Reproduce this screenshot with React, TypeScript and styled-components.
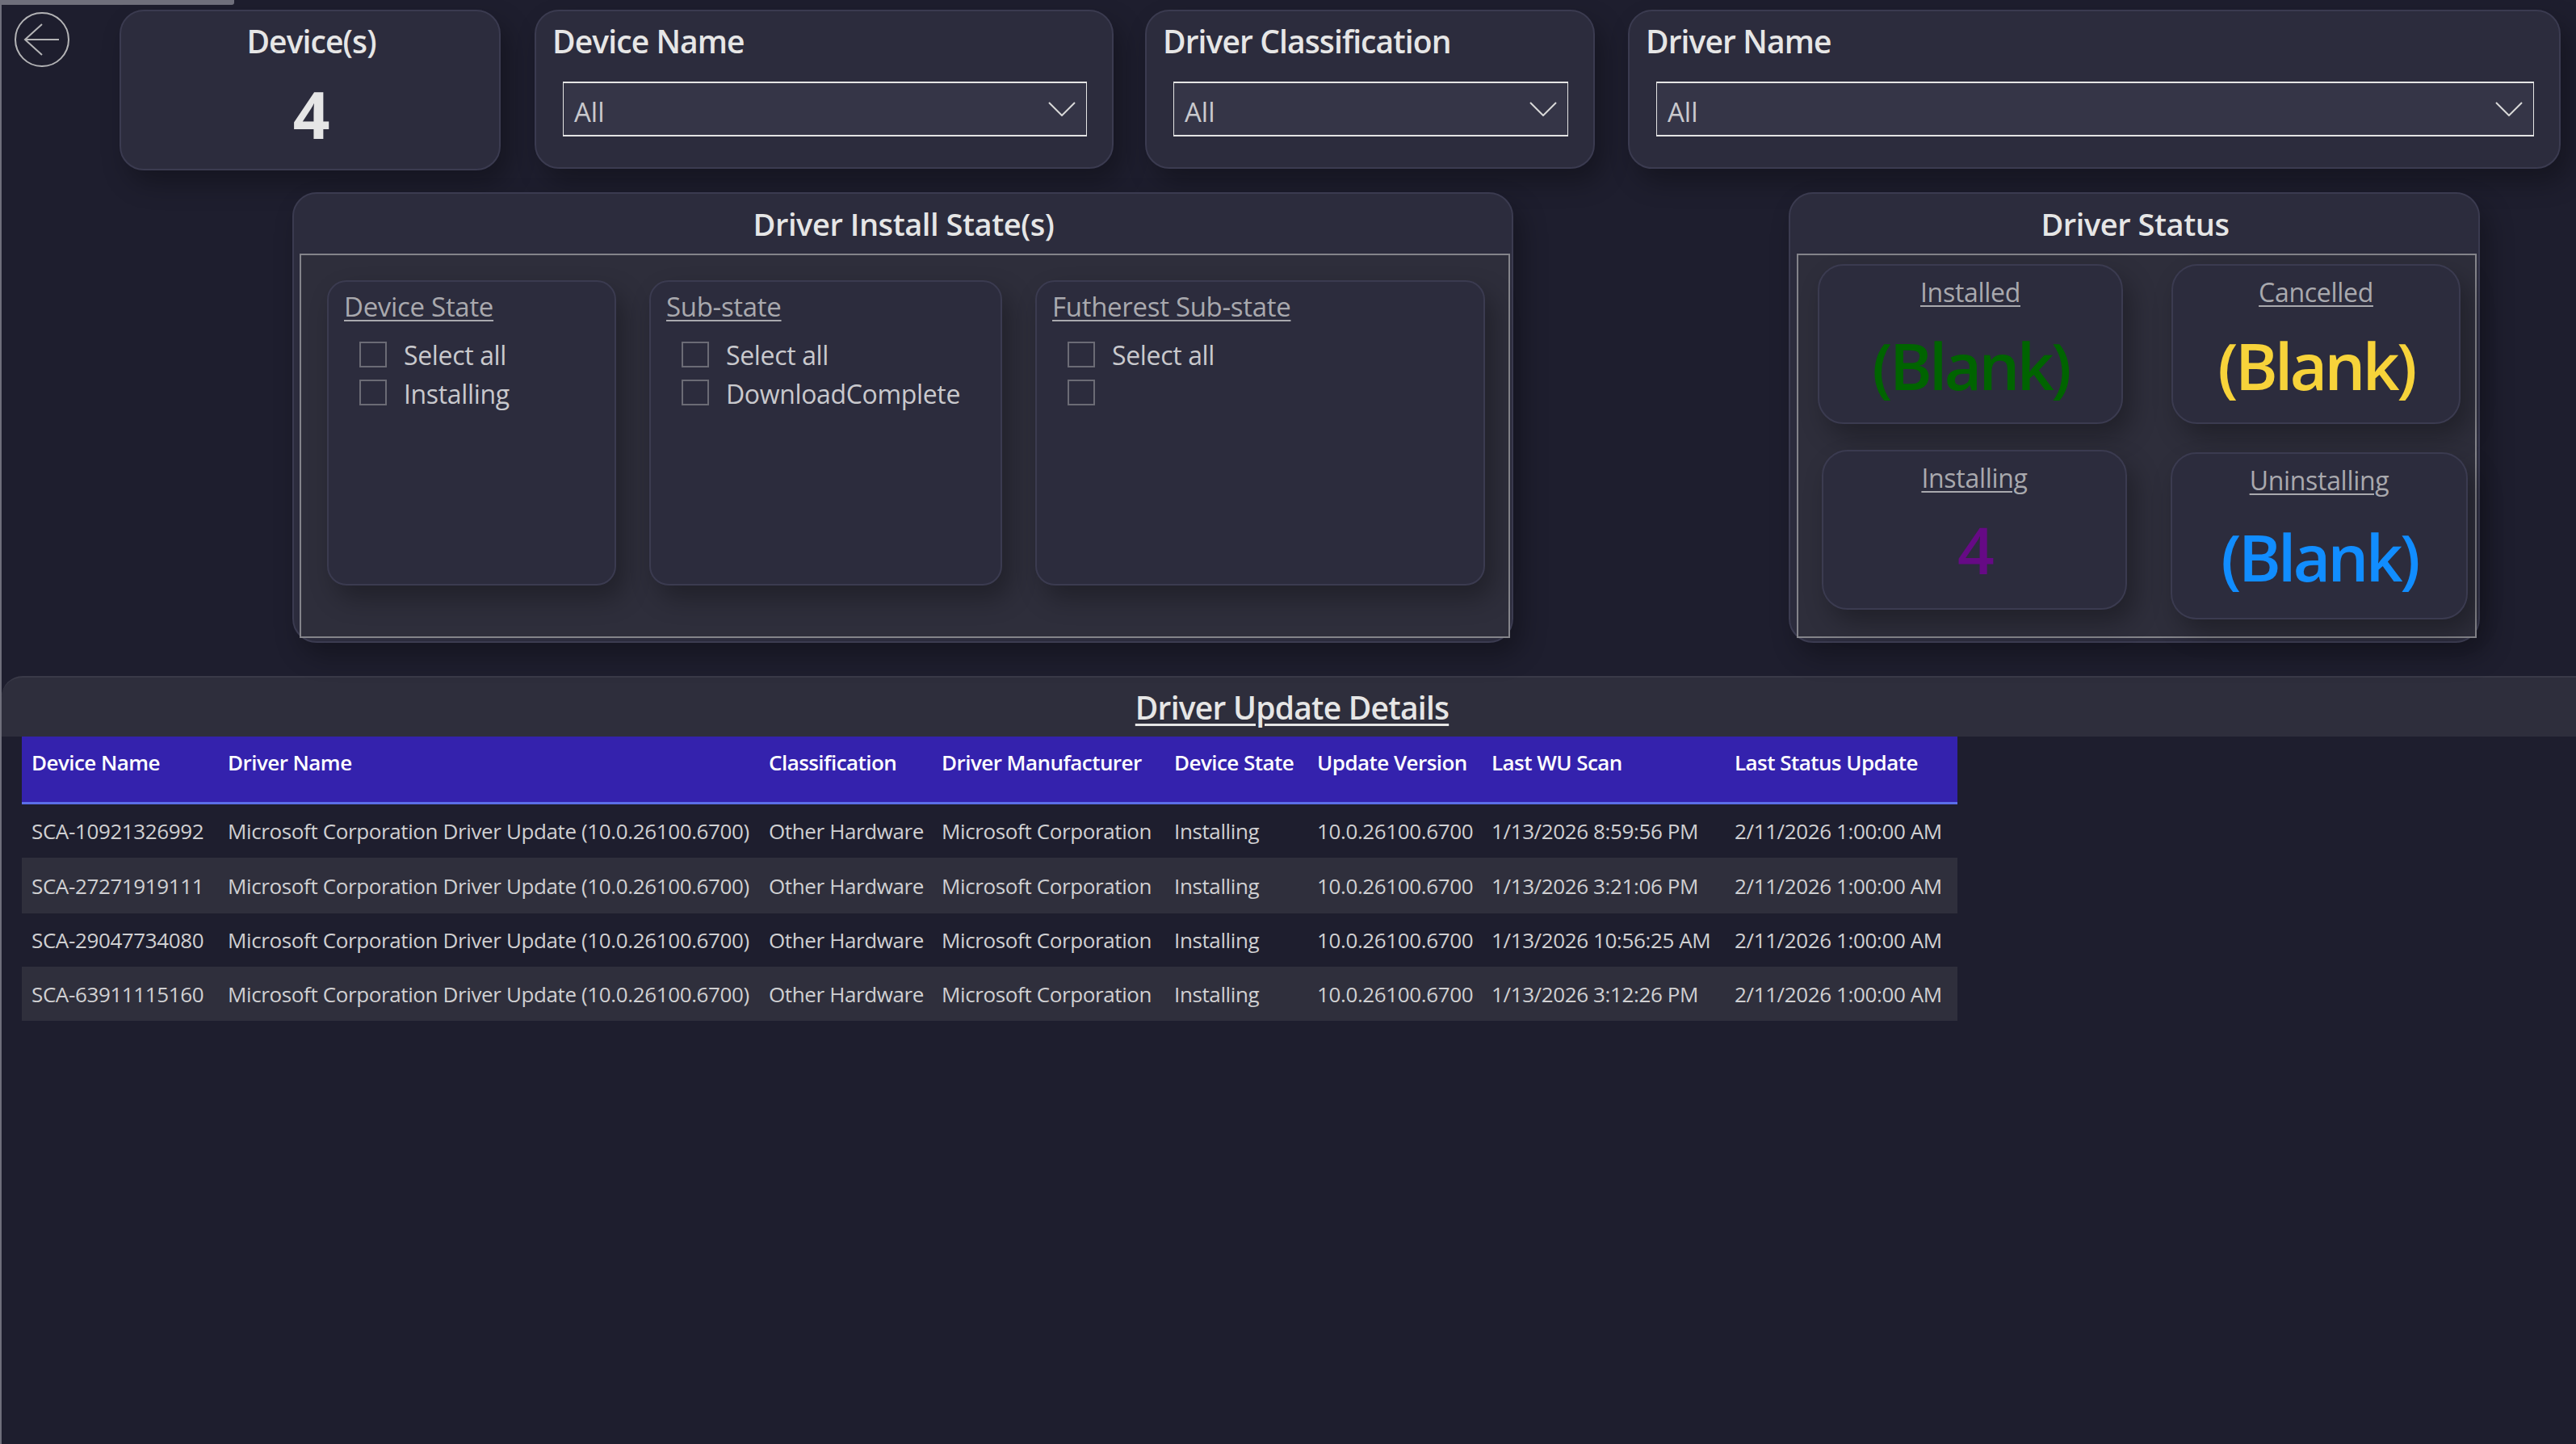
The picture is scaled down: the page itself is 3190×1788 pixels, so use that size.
import * as React from "react";
import styled, { createGlobalStyle } from "styled-components";

const font = `"Open Sans", "Noto Sans", "Liberation Sans", sans-serif`;

const colors = {
  page: "#1e1e2e",
  card: "#2c2c3d",
  cardEdge: "#3b3b50",
  box: "#2e2e3b",
  boxEdge: "#84848a",
  title: "#e6e6e6",
  muted: "#a9a9ae",
  item: "#c9c9cd",
  headBg: "#3422ad",
  headLine: "#5b6ee8",
  rowAlt: "#2f2f3c",
  rowText: "#d0d0d2",
};

const GlobalStyle = createGlobalStyle`
  html, body {
    margin: 0;
    background: ${colors.page};
    overflow: hidden;
  }
`;

type Column = { key: string; label: string; width: number };

const columns: Column[] = [
  { key: "device", label: "Device Name", width: 243 },
  { key: "driver", label: "Driver Name", width: 670 },
  { key: "cls", label: "Classification", width: 214 },
  { key: "maker", label: "Driver Manufacturer", width: 288 },
  { key: "state", label: "Device State", width: 177 },
  { key: "version", label: "Update Version", width: 216 },
  { key: "scan", label: "Last WU Scan", width: 301 },
  { key: "status", label: "Last Status Update", width: 288 },
];

const scans = [
  ["SCA-10921326992", "1/13/2026 8:59:56 PM"],
  ["SCA-27271919111", "1/13/2026 3:21:06 PM"],
  ["SCA-29047734080", "1/13/2026 10:56:25 AM"],
  ["SCA-63911115160", "1/13/2026 3:12:26 PM"],
];

const rows = scans.map(([device, scan]) => [
  device,
  "Microsoft Corporation Driver Update (10.0.26100.6700)",
  "Other Hardware",
  "Microsoft Corporation",
  "Installing",
  "10.0.26100.6700",
  scan,
  "2/11/2026 1:00:00 AM",
]);

const BackIcon: React.FC = () => (
  <svg width="70" height="70" viewBox="0 0 70 70" fill="none" stroke="#b4b4b6" strokeWidth="2">
    <circle cx="35" cy="35" r="33" />
    <path d="M56 35H14M35 16L14 35L35 54" />
  </svg>
);

const Chevron: React.FC = () => (
  <svg width="34" height="18" viewBox="0 0 34 18" fill="none" stroke="#d8d8d8" strokeWidth="2">
    <path d="M1 1L17 17L33 1" />
  </svg>
);

const Dropdown: React.FC = () => (
  <Select>
    <span>All</span>
    <Chevron />
  </Select>
);

const Slicer: React.FC<{ title: string; items: string[]; width: number }> = ({ title, items, width }) => (
  <SlicerCard $width={width}>
    <SlicerTitle>{title}</SlicerTitle>
    {items.map((item, i) => (
      <SlicerItem key={i}>
        <CheckBox />
        <span>{item}</span>
      </SlicerItem>
    ))}
  </SlicerCard>
);

const App: React.FC = () => {
  return (
    <Page>
      <GlobalStyle />
      <LoadBar />
      <TopRow>
        <BackButton>
          <BackIcon />
        </BackButton>
        <CountCard>
          <CardHeading $center>Device(s)</CardHeading>
          <BigCount>4</BigCount>
        </CountCard>
        <FilterCard $width={717} $gap={42}>
          <CardHeading>Device Name</CardHeading>
          <Dropdown />
        </FilterCard>
        <FilterCard $width={557} $gap={39}>
          <CardHeading>Driver Classification</CardHeading>
          <Dropdown />
        </FilterCard>
        <FilterCard $width={1155} $gap={41}>
          <CardHeading>Driver Name</CardHeading>
          <Dropdown />
        </FilterCard>
      </TopRow>

      <MiddleRow>
        <Panel $width={1512} $gap={360}>
          <PanelHeading>Driver Install State(s)</PanelHeading>
          <PanelBox $left={9}>
            <SlicerRow>
              <Slicer title="Device State" items={["Select all", "Installing"]} width={358} />
              <Slicer title="Sub-state" items={["Select all", "DownloadComplete"]} width={437} />
              <Slicer title="Futherest Sub-state" items={["Select all", ""]} width={557} />
            </SlicerRow>
          </PanelBox>
        </Panel>
        <Panel $width={856} $gap={341}>
          <PanelHeading>Driver Status</PanelHeading>
          <PanelBox $left={10}>
            <StatusGrid>
              <StatusCard $width={378} $height={198}>
                <StatusLabel>Installed</StatusLabel>
                <StatusValue $color="#006400" $gap={14}>(Blank)</StatusValue>
              </StatusCard>
              <StatusCard $width={358} $height={198} $left={1}>
                <StatusLabel>Cancelled</StatusLabel>
                <StatusValue $color="#f7d33a" $gap={14}>(Blank)</StatusValue>
              </StatusCard>
              <StatusCard $width={378} $height={198} $left={5}>
                <StatusLabel>Installing</StatusLabel>
                <StatusValue $color="#660a85" $gap={12}>4</StatusValue>
              </StatusCard>
              <StatusCard $width={368} $height={207} $top={3}>
                <StatusLabel>Uninstalling</StatusLabel>
                <StatusValue $color="#118dff" $gap={18}>(Blank)</StatusValue>
              </StatusCard>
            </StatusGrid>
          </PanelBox>
        </Panel>
      </MiddleRow>

      <DetailsSection>
        <DetailsHeading>
          <span>Driver Update Details</span>
        </DetailsHeading>
        <DetailsTable>
          <colgroup>
            {columns.map((c) => (
              <col key={c.key} style={{ width: c.width }} />
            ))}
          </colgroup>
          <thead>
            <tr>
              {columns.map((c) => (
                <HeadCell key={c.key}>{c.label}</HeadCell>
              ))}
            </tr>
          </thead>
          <tbody>
            {rows.map((row) => (
              <BodyRow key={row[0]}>
                {row.map((value, i) => (
                  <BodyCell key={i}>{value}</BodyCell>
                ))}
              </BodyRow>
            ))}
          </tbody>
        </DetailsTable>
      </DetailsSection>
    </Page>
  );
};

const Page = styled.div`
  background: ${colors.page};
  border-left: 2px solid #6f6f7b;
  box-sizing: border-box;
  color: ${colors.title};
  font-family: ${font};
  font-stretch: 88%;
  height: 100vh;
  overflow: hidden;
  padding-top: 12px;
  position: relative;
  width: 100vw;
`;

const LoadBar = styled.div`
  background: #6f6f7b;
  border-bottom-right-radius: 3px;
  height: 6px;
  left: -2px;
  position: absolute;
  top: 0;
  width: 290px;
`;

const TopRow = styled.div`
  align-items: flex-start;
  display: flex;
  padding-left: 15px;
`;

const BackButton = styled.div`
  height: 70px;
  margin-right: 61px;
  margin-top: 2px;
  width: 70px;
`;

const cardSurface = `
  background: ${colors.card};
  border: 2px solid ${colors.cardEdge};
  box-shadow: 10px 16px 32px rgba(0, 0, 0, 0.3);
  box-sizing: border-box;
`;

const CountCard = styled.div`
  ${cardSurface}
  border-radius: 30px;
  height: 199px;
  padding-left: 3px;
  padding-top: 14px;
  text-align: center;
  width: 472px;
`;

const FilterCard = styled.div<{ $width: number; $gap: number }>`
  ${cardSurface}
  border-radius: 30px;
  height: 197px;
  margin-left: ${(p) => p.$gap}px;
  padding-top: 14px;
  width: ${(p) => p.$width}px;
`;

const CardHeading = styled.div<{ $center?: boolean }>`
  color: ${colors.title};
  font-size: 39px;
  font-weight: 600;
  letter-spacing: -0.9px;
  line-height: 46px;
  padding-left: ${(p) => (p.$center ? 0 : 20)}px;
`;

const BigCount = styled.div`
  color: ${colors.title};
  font-size: 80px;
  font-weight: 700;
  line-height: 100px;
  margin-top: 17px;
`;

const Select = styled.div`
  align-items: center;
  background: #353547;
  border: 1px solid #e4e4e4;
  border-bottom-width: 2px;
  border-top-width: 2px;
  box-sizing: border-box;
  color: ${colors.item};
  display: flex;
  font-size: 33px;
  height: 68px;
  justify-content: space-between;
  margin: 27px 31px 0 33px;
  padding: 0 13px;

  span {
    position: relative;
    top: 3px;
  }
`;

const MiddleRow = styled.div`
  align-items: flex-start;
  display: flex;
  margin-top: 27px;
`;

const Panel = styled.div<{ $width: number; $gap: number }>`
  ${cardSurface}
  border-radius: 30px;
  height: 558px;
  margin-left: ${(p) => p.$gap}px;
  width: ${(p) => p.$width}px;
`;

const PanelHeading = styled.div`
  color: ${colors.title};
  font-size: 38px;
  font-weight: 600;
  height: 74px;
  letter-spacing: -0.45px;
  line-height: 74px;
  padding-left: 2px;
  text-align: center;
`;

const PanelBox = styled.div<{ $left: number }>`
  background: ${colors.box};
  border: 2px solid ${colors.boxEdge};
  box-sizing: border-box;
  height: 476px;
  margin-left: ${(p) => p.$left - 2}px;
  margin-right: 2px;
`;

const SlicerRow = styled.div`
  display: flex;
  gap: 41px;
  padding: 31px 0 0 32px;
`;

const SlicerCard = styled.div<{ $width: number }>`
  ${cardSurface}
  border-radius: 24px;
  height: 378px;
  padding: 0 0 0 19px;
  width: ${(p) => p.$width}px;
`;

const SlicerTitle = styled.div`
  color: ${colors.muted};
  font-size: 33px;
  letter-spacing: -0.3px;
  line-height: 42px;
  margin-bottom: 14px;
  margin-top: 10px;
  text-decoration: underline;
  text-decoration-thickness: 2px;
  text-underline-offset: 4px;
`;

const SlicerItem = styled.div`
  align-items: center;
  color: ${colors.item};
  display: flex;
  font-size: 32px;
  gap: 21px;
  height: 47.5px;
  letter-spacing: -0.35px;
  padding-left: 19px;

  span {
    padding-top: 2px;
  }
`;

const CheckBox = styled.div`
  border: 2px solid #6b6b75;
  box-sizing: border-box;
  flex: none;
  height: 32px;
  width: 34px;
`;

const StatusGrid = styled.div`
  display: grid;
  grid-template-columns: 437px 1fr;
  padding: 11px 0 0 24px;
  row-gap: 32px;
`;

const StatusCard = styled.div<{ $width: number; $height: number; $left?: number; $top?: number }>`
  ${cardSurface}
  border-radius: 32px;
  height: ${(p) => p.$height}px;
  margin-left: ${(p) => p.$left ?? 0}px;
  margin-top: ${(p) => p.$top ?? 0}px;
  padding-top: 11px;
  text-align: center;
  width: ${(p) => p.$width}px;
`;

const StatusLabel = styled.div`
  color: ${colors.muted};
  font-size: 32px;
  letter-spacing: -0.3px;
  line-height: 44px;
  text-decoration: underline;
  text-decoration-thickness: 2px;
  text-underline-offset: 4px;
`;

const StatusValue = styled.div<{ $color: string; $gap: number }>`
  color: ${(p) => p.$color};
  font-size: 80px;
  font-weight: 600;
  letter-spacing: -3.6px;
  line-height: 110px;
  margin-top: ${(p) => p.$gap - 1}px;
`;

const DetailsSection = styled.section`
  margin-top: 41px;
`;

const DetailsHeading = styled.div`
  background: #2e2e3c;
  border-top: 2px solid #3a3a48;
  border-top-left-radius: 26px;
  box-sizing: border-box;
  color: ${colors.title};
  font-size: 39px;
  font-weight: 600;
  height: 75px;
  letter-spacing: -0.77px;
  line-height: 74px;
  padding-left: 8px;
  text-align: center;
  text-decoration: underline;
  text-decoration-thickness: 3px;
  text-underline-offset: 5px;
`;

const DetailsTable = styled.table`
  border-collapse: separate;
  border-spacing: 0;
  margin-left: 25px;
  table-layout: fixed;
  width: 2397px;
`;

const HeadCell = styled.th`
  background: ${colors.headBg};
  border-bottom: 3px solid ${colors.headLine};
  box-sizing: border-box;
  color: #ffffff;
  font-size: 26px;
  font-weight: 600;
  height: 84px;
  letter-spacing: -0.55px;
  padding: 0 0 18px 12px;
  text-align: left;
  white-space: nowrap;
`;

const BodyRow = styled.tr`
  td {
    height: 66px;
  }

  &:nth-child(2) td {
    height: 69px;
  }

  &:nth-child(4) td {
    height: 67px;
  }

  &:nth-child(even) td {
    background: ${colors.rowAlt};
  }
`;

const BodyCell = styled.td`
  color: ${colors.rowText};
  font-size: 26px;
  letter-spacing: -0.38px;
  padding: 0 0 0 12px;
  white-space: nowrap;
`;

export default App;
